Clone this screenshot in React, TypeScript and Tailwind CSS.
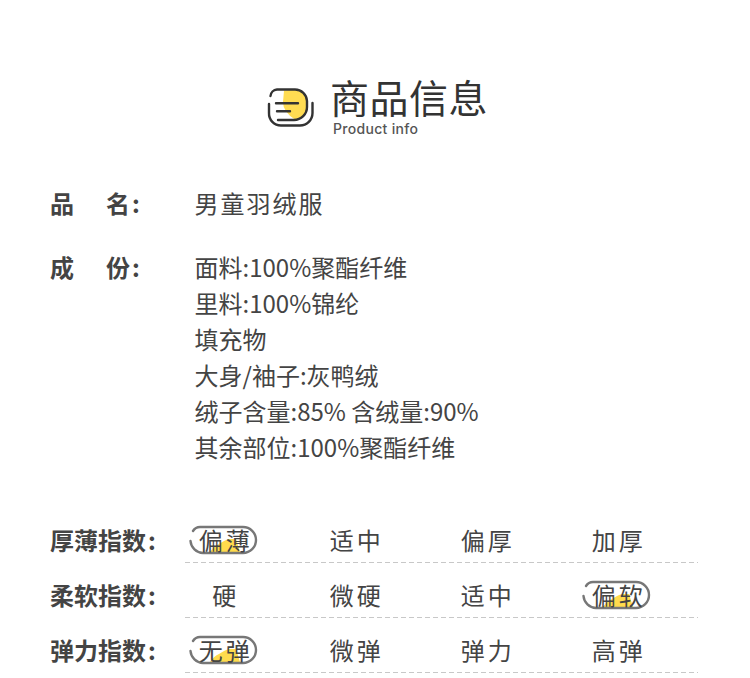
const font = { fontFamily: '"Noto Sans CJK SC", "Noto Sans", sans-serif' };

function Pill() {
  return (
    <svg className="absolute left-[30px] top-0 z-0" width="70" height="30" viewBox="0 0 70 30" fill="none">
      <path d="M21 27 Q25 21 30 19 Q36 15 40 14 H47 L51 27 Z" fill="#ffdb4d" />
      <path d="M4 6 Q6.5 2 11 2 H54 A13 13 0 0 1 54 28 H14 A13 13 0 0 1 1.5 16" stroke="#777777" strokeWidth="2.4" strokeLinecap="round" />
    </svg>
  );
}

function Cell({ text, on }: { text: string; on?: boolean }) {
  return (
    <div className="relative flex h-[30px] w-[131px] items-center justify-center">
      {on && <Pill />}
      <span className="relative z-10 pl-[2.5px] tracking-[3px]">{text}</span>
    </div>
  );
}

function Label({ text }: { text: string }) {
  return (
    <div className="w-[109px] font-bold">
      {text}
      <span className="ml-[2px]">:</span>
    </div>
  );
}

const rows = [
  { label: "厚薄指数", items: ["偏薄", "适中", "偏厚", "加厚"], on: 0 },
  { label: "柔软指数", items: ["硬", "微硬", "适中", "偏软"], on: 3 },
  { label: "弹力指数", items: ["无弹", "微弹", "弹力", "高弹"], on: 0 },
];

const lines = ["面料:100%聚酯纤维", "里料:100%锦纶", "填充物", "大身/袖子:灰鸭绒", "绒子含量:85% 含绒量:90%", "其余部位:100%聚酯纤维"];

export default function App() {
  return (
    <div style={font} className="h-[678px] w-[750px] overflow-hidden bg-white text-[24px] text-[#444444]">
      <div className="flex items-start pl-[262px] pt-[72px]">
        <svg className="mt-[12px]" width="60" height="50" viewBox="0 0 60 50" fill="none">
          <path d="M22 6.5 L33 5.5 A12 12 0 0 1 45 17 V23 A13 13 0 0 1 33 35.5 Q21 28 21 18 Z" fill="#ffdc52" />
          <path d="M8.5 12 A7 7 0 0 1 15 5.5 H33 A12 12 0 0 1 45 17 V23 A13 13 0 0 1 32 36 H16" stroke="#333333" strokeWidth="2.4" strokeLinecap="round" />
          <path d="M7 20 V29 A12 12 0 0 0 19 41.5 H38 A12.5 12.5 0 0 0 50.5 29 V19" stroke="#333333" strokeWidth="2.4" strokeLinecap="round" />
          <path d="M14 19.3 H36 M15 27.3 H28" stroke="#333333" strokeWidth="2.4" strokeLinecap="round" />
        </svg>
        <div className="ml-[8px]">
          <div className="text-[39px] leading-[48px] tracking-[0.5px] text-[#333333]">商品信息</div>
          <div className="mt-[1px] pl-[3px] text-[14px] font-medium leading-[16px] tracking-[0.3px] text-[#555555]" style={{ fontFamily: 'Inter, sans-serif' }}>Product info</div>
        </div>
      </div>

      <div className="mt-[48px] flex pl-[50px] leading-[36px]">
        <div className="w-[144.5px] font-bold">品<span className="ml-[32px]">名</span><span className="ml-[2px]">:</span></div>
        <div className="tracking-[2px]">男童羽绒服</div>
      </div>
      <div className="mt-[28px] flex pl-[50px] leading-[36px]">
        <div className="w-[144.5px] font-bold">成<span className="ml-[32px]">份</span><span className="ml-[2px]">:</span></div>
        <div>
          {lines.map((l) => (
            <div key={l}>{l}</div>
          ))}
        </div>
      </div>

      <div className="mt-[54px] pl-[50px]">
        {rows.map((r) => (
          <div key={r.label} className="mb-[12px]">
            <div className="flex h-[42px] items-center">
              <Label text={r.label} />
              {r.items.map((t, i) => (
                <Cell key={t} text={t} on={i === r.on} />
              ))}
            </div>
            <div className="ml-[135px] mt-[1px] -mb-[1px] h-px w-[513px] bg-[repeating-linear-gradient(to_right,#c8c8c8_0,#c8c8c8_5px,transparent_5px,transparent_8px)]" />
          </div>
        ))}
      </div>
    </div>
  );
}
